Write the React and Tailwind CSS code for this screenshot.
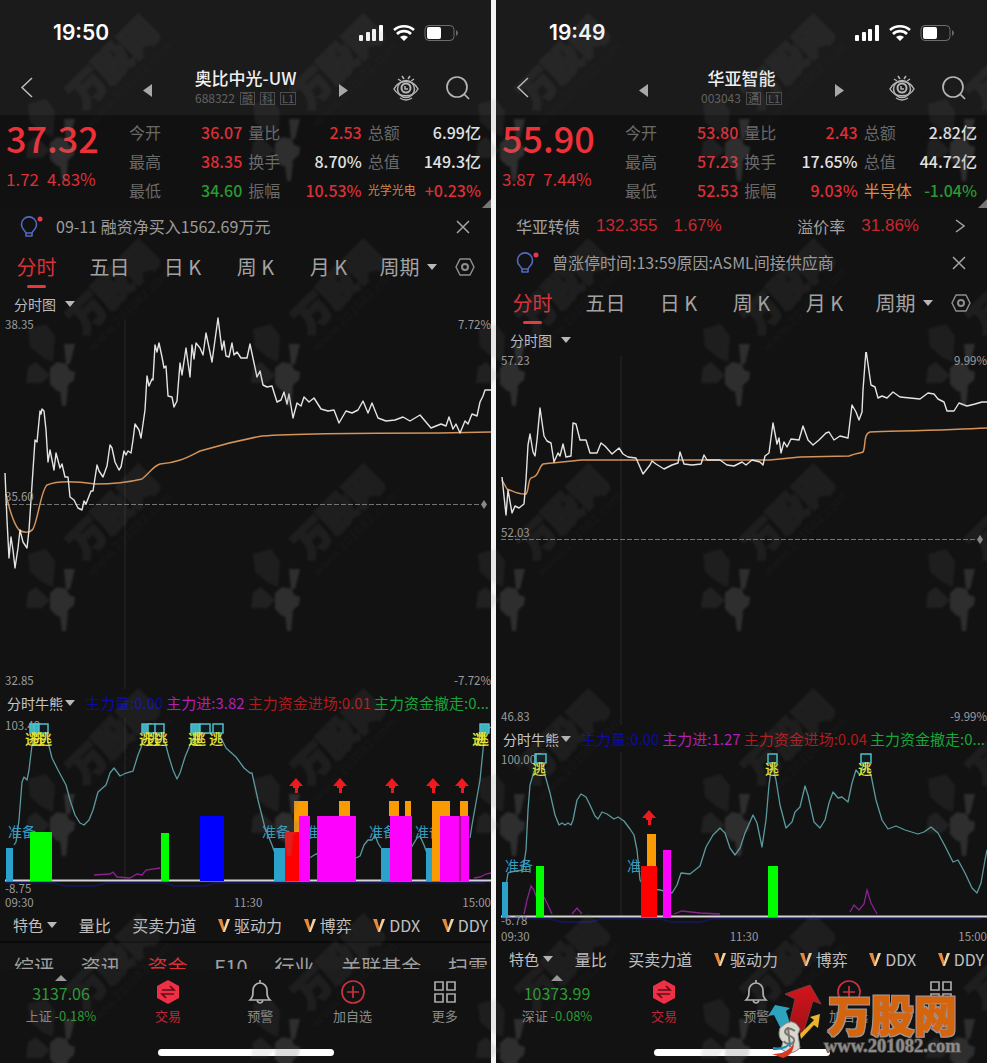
import React from "react";

const LEFT = {
  time: "19:50",
  name: "奥比中光-UW",
  code: "688322",
  tags: ["融", "科", "L1"],
  price: "37.32",
  change: "1.72",
  pct: "4.83%",
  quotes: [
    ["今开", "36.07", "up"], ["量比", "2.53", "up"], ["总额", "6.99亿", "flat"],
    ["最高", "38.35", "up"], ["换手", "8.70%", "flat"], ["总值", "149.3亿", "flat"],
    ["最低", "34.60", "down"], ["振幅", "10.53%", "up"], ["光学光电", "+0.23%", "up"],
  ],
  bond: null,
  message: "09-11 融资净买入1562.69万元",
  chart: {
    box: "0 316 491 376",
    x: 0,
    top: 325,
    bottom: 681,
    high: "38.35",
    low: "32.85",
    highPct: "7.72%",
    lowPct: "-7.72%",
    mid: "35.60",
    midText: 497,
    midLine: 504,
    price: "5,473 7,520 9,558 11,537 13,550 15,568 18,548 20,530 23,542 27,548 29,530 31,500 33,470 35,440 37,442 40,411 41,414 42,409 44,411 46,430 48,462 50,450 54,470 56,453 60,468 62,464 65,477 68,477 70,497 74,500 78,508 82,510 84,501 86,504 91,491 93,491 97,465 99,471 103,477 107,466 110,445 112,448 115,462 119,470 121,467 124,451 126,455 128,451 131,453 133,440 135,424 139,430 141,438 145,410 147,376 149,386 152,379 153,380 155,345 157,352 159,343 162,357 164,368 166,366 168,396 172,397 174,407 177,401 180,363 182,375 186,348 190,377 192,345 194,359 196,343 200,348 203,355 206,333 212,362 218,318 222,350 224,341 226,356 229,357 232,343 234,355 237,352 241,358 247,358 250,344 257,377 260,371 263,385 267,387 272,386 277,402 281,400 284,392 287,404 289,394 293,418 297,403 301,406 304,397 309,402 314,398 321,409 328,411 334,410 339,423 346,411 352,413 358,410 363,401 368,413 372,403 378,418 386,421 395,420 403,417 410,421 420,415 431,428 441,424 446,426 449,417 453,429 456,424 460,433 465,421 468,424 472,414 477,416 480,402 483,396 485,390 491,390",
    average: "M6 494C9 508 14 524 19 530C24 533 30 533 33 529C38 520 41 490 47 485C58 480 75 481 95 484C112 484 130 482 142 479C150 473 153 466 160 464C178 463 188 457 200 451C220 445 240 440 262 436C300 433 380 433 440 433L491 432",
  },
  bull: {
    box: "0 716 491 194",
    base: 880,
    top: "103.49",
    topY: 726,
    low: "-8.75",
    lowY: 889,
    timeY: 903,
    cyan: ["14,845 16,842 19,820 22,782 24,777 27,780 29,770 32,745 36,730 46,730 48,742 52,758 58,770 66,785 70,800 75,815 80,823 84,825 89,820 93,810 98,792 106,785 110,773 114,768 120,776 126,773 133,771 138,755 142,745 146,730 160,730 165,742 169,757 173,770 177,779 180,773 185,757 190,745 197,734 218,732 226,748 236,757 244,768 250,773 252,773 258,800 265,828 272,845 276,856", "308,858 311,857 316,854 320,854", "356,858 360,856 364,845 368,840 372,840 375,835 378,843 381,848", "411,848 417,838 420,836 424,845 428,856", "470,838 472,825 480,780 485,730 491,727"],
    magenta: ["94,875 110,874 113,872 117,877 130,878 137,874 142,875 146,870 160,868", "474,878 480,877 486,874 491,873"],
    bars: [
      [6, 848, 7, 880, "#2aa2c9"], [30, 832, 22, 880, "#00fe00"], [161, 833, 8, 880, "#00fe00"], [200, 816, 24, 880, "#0000fe"],
      [274, 848, 12, 880, "#2aa2c9"], [294, 801, 14, 880, "#fb9b04"], [299, 816, 11, 880, "#fd02fd"], [285, 832, 14, 880, "#fe0000"],
      [317, 816, 39, 880, "#fd02fd"], [339, 801, 11, 816, "#fb9b04"],
      [381, 848, 9, 880, "#2aa2c9"], [390, 816, 22, 880, "#fd02fd"], [389, 801, 10, 816, "#fb9b04"], [405, 801, 6, 816, "#fb9b04"],
      [426, 848, 6, 880, "#2aa2c9"], [432, 801, 18, 816, "#fb9b04"], [432, 816, 8, 880, "#fb9b04"], [440, 816, 29, 880, "#fd02fd"],
      [459, 816, 2, 880, "#a8108c"], [460, 801, 8, 816, "#fb9b04"],
    ],
    arrows: [[296, 778], [340, 778], [392, 778], [433, 778], [462, 778]],
    boxes: [[30, 723, 8, 1], [34, 723, 6, 1], [39, 723, 9, 0], [142, 723, 9, 1], [148, 723, 8, 0], [155, 723, 9, 0], [191, 723, 9, 1], [200, 723, 10, 0], [213, 723, 10, 0], [480, 723, 9, 1]],
    escape: [[25, 739], [31, 739], [38, 739], [139, 739], [146, 739], [154, 739], [188, 739], [192, 739], [209, 739], [472, 739], [475, 739]],
    ready: [[8, 832, "准备"], [262, 832, "准备"], [305, 832, "准备"], [369, 832, "准备"], [415, 832, "准备"]],
  },
  inflow: "3.82",
  entry: "0.01",
  index: "3137.06",
  indexName: "上证",
  indexPct: "-0.18%",
  sections: ["综评", "资讯", "资金", "F10", "行业", "关联基金", "扫雷"],
};

const RIGHT = {
  time: "19:49",
  name: "华亚智能",
  code: "003043",
  tags: ["通", "L1"],
  price: "55.90",
  change: "3.87",
  pct: "7.44%",
  quotes: [
    ["今开", "53.80", "up"], ["量比", "2.43", "up"], ["总额", "2.82亿", "flat"],
    ["最高", "57.23", "up"], ["换手", "17.65%", "flat"], ["总值", "44.72亿", "flat"],
    ["最低", "52.53", "up"], ["振幅", "9.03%", "up"], ["半导体", "-1.04%", "down"],
  ],
  bond: { name: "华亚转债", price: "132.355", pct: "1.67%", premium: "31.86%" },
  message: "曾涨停时间:13:59原因:ASML间接供应商",
  chart: {
    box: "496 352 491 376",
    x: 496,
    top: 361,
    bottom: 717,
    high: "57.23",
    low: "46.83",
    highPct: "9.99%",
    lowPct: "-9.99%",
    mid: "52.03",
    midText: 533,
    midLine: 539,
    price: "502,477 506,515 508,490 512,513 515,506 519,508 524,504 526,480 528,445 530,434 533,452 535,456 537,440 540,408 544,436 547,441 551,443 554,462 558,453 560,456 563,444 566,457 571,456 573,423 576,424 580,440 586,440 590,453 597,453 601,443 605,446 612,454 619,448 623,454 628,457 636,458 643,474 650,465 652,461 656,464 664,469 672,465 678,463 680,452 684,464 692,465 701,464 704,455 707,460 720,460 727,465 734,466 742,462 746,465 752,460 760,462 763,465 765,456 769,453 773,423 777,444 779,438 781,453 784,442 787,447 791,439 799,440 803,426 808,440 813,445 819,440 826,433 829,432 834,440 840,436 848,438 852,405 856,412 859,420 862,412 863,390 866,350 871,385 875,387 878,398 882,396 887,398 893,392 900,397 920,399 928,393 934,394 938,399 944,402 947,411 954,411 959,403 967,406 975,404 982,402 987,402",
    average: "M502 480L507 489C513 491 519 495 526 494C529 490 528 480 531 478C540 476 538 467 543 464C556 463 570 461 582 460L770 460L800 457L849 456C856 453 861 453 863 452C866 447 863 434 870 432C900 431 950 430 987 428",
  },
  bull: {
    box: "496 752 491 192",
    base: 916,
    top: "100.00",
    topY: 760,
    low: "-6.78",
    lowY: 921,
    timeY: 937,
    cyan: ["506,886 508,873 510,872 523,870 526,850 528,810 530,785 533,775 537,762 543,762 545,775 550,793 555,815 559,825 562,823 565,825 568,823 571,825 573,820 577,800 581,794 586,797 590,805 595,816 598,819 602,812 607,814 614,819 618,817 624,821 630,829 634,835 637,850 640,880 645,888 660,890 672,893 677,885 681,873 690,874 700,866 706,847 713,835 720,828 725,833 730,848 735,855 740,848 745,833 753,815 757,823 762,847 766,820 769,785 772,763 776,780 780,805 786,828 792,822 795,812 800,807 805,786 808,795 814,822 820,828 825,820 829,803 833,792 838,798 842,797 848,802 852,783 856,770 860,775 864,762 871,775 876,800 882,820 888,829 896,826 905,830 918,834 924,832 931,827 938,833 945,846 953,862 958,860 965,873 972,888 977,893 981,883 985,860 987,850"],
    magenta: ["524,914 527,900 531,886 534,890 538,902", "544,897 547,903 552,914", "572,914 577,908 582,914", "674,914 682,911 700,913 720,914", "850,912 854,905 859,910 864,904 867,890 871,903 877,914"],
    bars: [
      [502, 882, 6, 916, "#2aa2c9"], [536, 866, 8, 916, "#00fe00"], [647, 834, 9, 866, "#fb9b04"], [641, 866, 16, 916, "#fe0000"],
      [663, 850, 8, 916, "#fd02fd"], [768, 866, 10, 916, "#00fe00"],
    ],
    arrows: [[649, 810]],
    boxes: [[535, 753, 6, 0], [536, 753, 10, 0], [768, 753, 9, 0], [861, 753, 10, 0]],
    escape: [[532, 769], [765, 769], [858, 769]],
    ready: [[505, 866, "准备"], [627, 866, "准"]],
  },
  inflow: "1.27",
  entry: "0.04",
  index: "10373.99",
  indexName: "深证",
  indexPct: "-0.08%",
  sections: null,
};

const tone = { up: "text-[#dc2f38]", down: "text-[#2b9a32]", flat: "text-[#e2e2e2]" };

function StatusBar({ time }) {
  return (
    <div className="flex h-[66px] items-center justify-between pl-[53px] pr-[31px] text-white">
      <span className="font-[Inter] text-[21px] font-semibold">{time}</span>
      <svg className="h-5 w-[102px]" viewBox="0 0 102 20" fill="#fff" aria-hidden="true">
        <rect x="1" y="12" width="4" height="6" rx="1" />
        <rect x="8" y="9" width="4" height="9" rx="1" />
        <rect x="14" y="6" width="4" height="12" rx="1" />
        <rect x="21" y="2" width="4" height="16" rx="1" />
        <path d="M46 18l-4-4a6 6 0 0 1 8 0z" />
        <path d="M39 11a10 10 0 0 1 14 0M36 7a15 15 0 0 1 20 0" fill="none" stroke="#fff" strokeWidth="2.6" />
        <rect x="67" y="2.500" width="29" height="15" rx="4" fill="none" stroke="#6d6d6d" />
        <rect x="69" y="4" width="14" height="12" rx="2" />
        <path d="M98 7q4 3 0 6z" fill="#6d6d6d" />
      </svg>
    </div>
  );
}

function NavBar({ data }) {
  return (
    <header className="grid h-[49px] grid-cols-[1fr_208px_1fr] items-center pb-[6px] pl-[20px] pr-[20px]">
      <button aria-label="返回" className="justify-self-start">
        <svg className="h-6 w-[14px]" viewBox="0 0 14 24" fill="none" stroke="#bdbdbd" strokeWidth="1.5"><path d="M12 2L2 11.500L12 21" /></svg>
      </button>
      <div className="flex items-center justify-between">
        <button aria-label="上一只" className="pt-1"><svg className="h-[13px] w-3" viewBox="0 0 12 13" fill="#a9a9a9"><path d="M10 0v13L1 6.500z" /></svg></button>
        <div className="flex flex-col items-center pb-1">
          <h1 className="text-[17px] font-medium leading-6 text-[#f0f0f0]">{data.name}</h1>
          <p className="flex items-center gap-[5px] text-[12px] leading-4 text-[#626262]">
            <span>{data.code}</span>
            {data.tags.map((t) => (
              <span key={t} className="flex h-[13px] items-center border border-[#4c4c4c] px-px text-[11px]">{t}</span>
            ))}
          </p>
        </div>
        <button aria-label="下一只" className="pt-1"><svg className="h-[13px] w-3" viewBox="0 0 12 13" fill="#a9a9a9"><path d="M2 0v13l9-6.500z" /></svg></button>
      </div>
      <div className="flex items-center gap-[22px] justify-self-end">
        <button aria-label="诊股">
          <svg className="h-7 w-[30px]" viewBox="0 0 30 28" fill="none" stroke="#b5b5b5" strokeWidth="1.500">
            <path d="M3 15C8 5 22 5 27 15C22 24 8 24 3 15z" />
            <circle cx="15" cy="15" r="8.500" />
            <circle cx="15" cy="14" r="4.500" strokeWidth="2" />
            <path d="M14 12v3h3M9 24q6 4 12 0M7 5l3 2M11 2l2 3M19 2l-2 3M23 5l-3 2" />
          </svg>
        </button>
        <button aria-label="搜索">
          <svg className="h-7 w-7" viewBox="0 0 28 28" fill="none" stroke="#b5b5b5" strokeWidth="1.700"><circle cx="14" cy="13" r="10" /><path d="M21 20l5 5" /></svg>
        </button>
      </div>
    </header>
  );
}

function Quote({ data }) {
  return (
    <section className="relative flex h-[93px] bg-[#111]">
      <div className="w-[122px] pl-[6px] text-[#dc2f38]">
        <p className="pt-[2px] text-[36px] font-medium leading-10 text-[#ee3039]">{data.price}</p>
        <p className="flex gap-[8px] pt-[10px] text-[17px] leading-6"><span>{data.change}</span><span>{data.pct}</span></p>
      </div>
      <dl className="grid flex-1 grid-cols-3 gap-x-[6px] pb-[4px] pl-[7px] pr-[10px] pt-[2px] text-[16px] leading-7">
        {data.quotes.map(([label, value, kind], i) => (
          <div key={label} className="flex items-center justify-between whitespace-nowrap">
            <dt className={i < 8 ? "text-[#6a6a6a]" : label.length > 3 ? "text-[12px] text-[#d08448]" : "text-[#e0894a]"}>{label}</dt>
            <dd className={"font-medium " + tone[kind]}>{value}</dd>
          </div>
        ))}
      </dl>
      <svg className="absolute bottom-0 right-0 h-[9px] w-[9px]" viewBox="0 0 9 9" fill="#777" aria-hidden="true"><path d="M9 0v9H0z" /></svg>
    </section>
  );
}

function Bond({ bond }) {
  return (
    <a href="#bond" className="flex h-9 items-center pl-[20px] pr-[22px] text-[16px] text-[#a2a2a2]">
      <span>{bond.name}</span>
      <span className="ml-4 font-['Liberation_Sans'] text-[17px] text-[#c9262f]">{bond.price}</span>
      <span className="ml-4 font-['Liberation_Sans'] text-[17px] text-[#c9262f]">{bond.pct}</span>
      <span className="ml-auto">溢价率</span>
      <span className="ml-4 mr-[36px] font-['Liberation_Sans'] text-[17px] text-[#c9262f]">{bond.premium}</span>
      <svg className="h-4 w-[10px]" viewBox="0 0 10 16" fill="none" stroke="#a2a2a2" strokeWidth="1.500"><path d="M1 2l8 6-8 6" /></svg>
    </a>
  );
}

function Message({ text }) {
  return (
    <div className="flex h-[37px] items-center pl-[19px] pr-[21px] text-[16px] text-[#9c9c9c]">
      <svg className="mr-[11px] h-[26px] w-[26px]" viewBox="0 0 26 26" fill="none" aria-hidden="true">
        <path d="M7 19q-1-2-2.500-3.500a7.500 7.500 0 1 1 11 0Q14 17 13 19v3H7zM7 19h6" stroke="#5269c4" strokeWidth="1.600" strokeLinejoin="round" />
        <circle cx="21" cy="5" r="2.500" fill="#e8384d" />
      </svg>
      <span className="flex-1 pb-[2px]">{text}</span>
      <button aria-label="关闭"><svg className="h-[14px] w-[14px]" viewBox="0 0 14 14" stroke="#a5a5a5" strokeWidth="1.500"><path d="M1 1l12 12M13 1L1 13" /></svg></button>
    </div>
  );
}

function Caret() {
  return <svg className="h-[6px] w-[10px]" viewBox="0 0 10 6" fill="#b8b8b8" aria-hidden="true"><path d="M0 0h10L5 6z" /></svg>;
}

function Periods() {
  return (
    <div>
      <nav className="grid h-11 grid-cols-[73fr_73fr_73fr_73fr_73fr_86fr_40fr] text-[20px] text-[#a3a3a3]">
        <button className="flex flex-col items-center pt-[7px] text-[#dc2f38]">
          <span className="leading-[30px]">分时</span>
          <span className="mt-[3px] h-[3px] w-[19px] rounded-full bg-[#e8383f]" />
        </button>
        <button>五日</button>
        <button>日 K</button>
        <button>周 K</button>
        <button>月 K</button>
        <button className="flex items-center justify-center gap-[7px]">周期<Caret /></button>
        <button className="flex items-center pl-1" aria-label="设置">
          <svg className="h-5 w-5" viewBox="0 0 20 20" fill="none" stroke="#8e8e8e" strokeWidth="1.500"><path d="M5 2h10l4 8-4 8H5l-4-8z" strokeLinejoin="round" /><circle cx="10" cy="10" r="3" strokeWidth="2" /></svg>
        </button>
      </nav>
      <button className="flex h-[27px] items-center gap-[9px] pl-[14px] pt-[3px] text-[14px] text-[#bcbcbc]">分时图<Caret /></button>
    </div>
  );
}

function PriceChart({ c }) {
  const r = c.x + 491;
  return (
    <svg className="h-auto w-full" viewBox={c.box} role="img" aria-label="分时走势">
      <path d={`M${c.x + 125} ${c.top - 5}V${c.bottom + 8}`} stroke="#1c1c1c" strokeWidth="2" />
      <path d={`M${c.x + 5} ${c.midLine}.5H${r - 10}`} stroke="#747474" strokeDasharray="5 2" />
      <path d={`M${r - 7} ${c.midLine - 4}l3 4.500-3 4.500-3-4.500z`} fill="#888" />
      <path d={c.average} fill="none" stroke="#d3935a" strokeWidth="1.500" />
      <polyline points={c.price} fill="none" stroke="#e4e4e4" strokeWidth="1.400" strokeLinejoin="round" />
      <g fill="#9b9b9b" fontSize="11.500">
        <text x={c.x + 5} y={c.top + 4}>{c.high}</text>
        <text x={r} y={c.top + 4} textAnchor="end">{c.highPct}</text>
        <text x={c.x + 5} y={c.midText + 4}>{c.mid}</text>
        <text x={c.x + 5} y={c.bottom + 4}>{c.low}</text>
        <text x={r} y={c.bottom + 4} textAnchor="end">{c.lowPct}</text>
      </g>
    </svg>
  );
}

function BullChart({ b, x }) {
  return (
    <svg className="h-auto w-full" viewBox={b.box} role="img" aria-label="分时牛熊">
      <path d={`M${x + 125} ${b.topY - 8}V${b.base}`} stroke="#1c1c1c" strokeWidth="2" />
      <path d={`M${x + 5} ${b.base + 3}h50l10 3h30l10-3h60l10 3h30l10-3h270`} fill="none" stroke="#15154e" strokeWidth="2" />
      <g fill="#9b9b9b" fontSize="11.500"><text x={x + 5} y={b.topY + 4}>{b.top}</text></g>
      {b.magenta.map((p) => <polyline key={p} points={p} fill="none" stroke="#8d2192" strokeWidth="1.300" />)}
      <g fill="#2f9dc6" fontSize="14">{b.ready.map(([tx, ty, t]) => <text key={tx} x={tx} y={ty + 5}>{t}</text>)}</g>
      {b.cyan.map((p) => <polyline key={p} points={p} fill="none" stroke="#5a9a9e" strokeWidth="1.300" strokeLinejoin="round" />)}
      {b.bars.map(([bx, y, w, end, color], i) => <rect key={i} x={bx} y={y} width={w} height={end - y} fill={color} />)}
      <path d={`M${x + 5} ${b.base}.5H${x + 491}`} stroke="#d4d4d4" strokeWidth="2" />
      {b.bars.filter((v) => v[3] === b.base).map(([bx, , w, end, color], i) => <rect key={i} x={bx} y={end - 1} width={w} height="2" fill={color} />)}
      {b.boxes.map(([bx, y, w, full], i) => <rect key={i} x={bx} y={y + 1} width={w} height="9" fill={full ? "#3fb3bd" : "#10191b"} stroke="#4fc0d0" strokeWidth="1.500" />)}
      <g fill="#e6e639" fontSize="14" fontWeight="500">{b.escape.map(([tx, ty]) => <text key={tx} x={tx} y={ty + 5}>逃</text>)}</g>
      {b.arrows.map(([ax, ay]) => <path key={ax} d={`M${ax} ${ay}l7 8h-4v2h-1v5h-3v-5h-2v-2h-4z`} fill="#f0191d" />)}
      <g fill="#9b9b9b" fontSize="11.500">
        <text x={x + 5} y={b.lowY + 4}>{b.low}</text>
        <text x={x + 5} y={b.timeY + 4}>09:30</text>
        <text x={x + 248} y={b.timeY + 4} textAnchor="middle">11:30</text>
        <text x={x + 491} y={b.timeY + 4} textAnchor="end">15:00</text>
      </g>
    </svg>
  );
}

function Legend({ data }) {
  return (
    <div className="flex h-6 items-center overflow-hidden whitespace-nowrap pb-[2px] pl-[7px] text-[15px]">
      <button className="flex items-center gap-[2px] text-[14px] text-[#c6c6c6]">分时牛熊<Caret /></button>
      <span className="ml-[10px] text-[#0c0c9e]">主力量:0.00</span>
      <span className="ml-[3px] text-[#b21fb5]">主力进:{data.inflow}</span>
      <span className="ml-[3px] text-[#b3181c]">主力资金进场:{data.entry}</span>
      <span className="ml-[3px] text-[#16a63a]">主力资金撤走:0...</span>
    </div>
  );
}

function Vip({ children }) {
  return (
    <button className="flex items-center gap-[4px]">
      <svg className="h-[13px] w-[12px]" viewBox="0 0 12 13" aria-hidden="true"><path d="M0 0h4l2 8 1 4-2 1z" fill="#e78a3a" /><path d="M9 0h3L7 13H5l1-4z" fill="#f5cf9c" /></svg>
      {children}
    </button>
  );
}

function Features() {
  return (
    <div className="flex h-[31px] items-center justify-between whitespace-nowrap pb-px pl-[13px] pr-[3px] text-[16px] text-[#c0c0c0]">
      <button className="flex items-center gap-[4px] text-[15px]">特色<Caret /></button>
      <button>量比</button>
      <button>买卖力道</button>
      <Vip>驱动力</Vip>
      <Vip>博弈</Vip>
      <Vip>DDX</Vip>
      <Vip>DDY</Vip>
    </div>
  );
}

function Sections({ items }) {
  return (
    <nav className="flex h-7 justify-between overflow-hidden whitespace-nowrap border-t-2 border-[#0a0a0a] bg-[#141414] pl-[14px] pr-[3px] pt-[12px] text-[20px] leading-6 text-[#a0a0a0]">
      {items.map((s) => <a key={s} href={"#" + s} className={s === "资金" ? "text-[#dc2f38]" : ""}>{s}</a>)}
    </nav>
  );
}

function Action({ label, red, children }) {
  return (
    <button className={"flex flex-1 flex-col items-center text-[13px] leading-[18px] " + (red ? "text-[#c3263a]" : "text-[#8a8a8a]")}>
      <svg className="mb-[2px] h-[26px] w-[26px]" viewBox="0 0 26 26" fill="none" strokeWidth="1.700" aria-hidden="true">{children}</svg>
      {label}
    </button>
  );
}

function BottomBar({ data }) {
  return (
    <footer className="mt-auto">
      <div className="flex items-end">
        <a href="#index" className="flex w-[122px] flex-col items-center text-[#2b9a32]">
          <svg className="h-[6px] w-[12px]" viewBox="0 0 12 6" fill="#9a9a9a" aria-hidden="true"><path d="M6 0l6 6H0z" /></svg>
          <span className="pb-[2px] text-[16px] leading-6">{data.index}</span>
          <span className="whitespace-nowrap text-[13px] leading-[18px]"><span className="text-[#8a8a8a]">{data.indexName}</span> {data.indexPct}</span>
        </a>
        <Action label="交易" red>
          <path d="M13 1l11 6v12l-11 6-11-6V7z" fill="#ee2f45" />
          <path d="M7 11h12l-4-4M19 15H7l4 4" stroke="#5c1018" />
        </Action>
        <Action label="预警">
          <path d="M3 21c3-3 3-5 3-10a7 7 0 0 1 14 0c0 5 0 7 3 10zM10 22q3 4 6 0M13 1v3" stroke="#b4b4b4" />
        </Action>
        <Action label="加自选">
          <circle cx="13" cy="13" r="11" stroke="#c9323f" />
          <path d="M13 7v12M7 13h12" stroke="#c9323f" />
        </Action>
        <Action label="更多">
          <path d="M3 3h8v8H3zM15 3h8v8h-8zM3 15h8v8H3zM15 15h8v8h-8z" stroke="#a8a8a8" />
        </Action>
      </div>
      <div className="mx-auto mb-[9px] mt-[24px] h-[7px] w-[176px] rounded-full bg-white" />
    </footer>
  );
}

function Phone({ data }) {
  return (
    <article className="flex min-w-0 flex-1 flex-col bg-[#121212]">
      <div className="bg-[#1b1b1b]">
        <StatusBar time={data.time} />
        <NavBar data={data} />
      </div>
      <Quote data={data} />
      {data.bond && <Bond bond={data.bond} />}
      <Message text={data.message} />
      <Periods />
      <PriceChart c={data.chart} />
      <Legend data={data} />
      <BullChart b={data.bull} x={data.chart.x} />
      <Features />
      {data.sections && <Sections items={data.sections} />}
      <BottomBar data={data} />
    </article>
  );
}

function Watermark() {
  return (
    <svg className="pointer-events-none absolute inset-0 h-full w-full" aria-hidden="true">
      <defs>
        <filter id="soft"><feGaussianBlur stdDeviation="1" /></filter>
        <pattern id="mark" width="225" height="225" patternUnits="userSpaceOnUse">
          <g fill="#808080" filter="url(#soft)">
            <g opacity=".11">
              <text x="0" y="0" transform="translate(84 110) rotate(-45)" fontSize="36" fontWeight="900" stroke="#808080" strokeWidth="3">万股网</text>
              <path d="M28 104l18-5 9 12-2 26-11-5-12-10z" />
            </g>
            <g opacity=".04">
              <text x="0" y="0" transform="translate(92 128) rotate(-45)" fontSize="13" fontWeight="700">www.201082.com</text>
            </g>
            <path opacity=".13" d="M26 158l2-16 8-5 14 13-8 8z" />
            <g opacity=".26">
              <path d="M50 143l7-6 10 2 2 6 6 2-1 8-5 4-4 8-8-1-7-7zM66 139l-2-20h11l-5 20zM60 165l8-2-2 18h-4z" />
            </g>
          </g>
        </pattern>
      </defs>
      <rect width="100%" height="100%" fill="url(#mark)" />
    </svg>
  );
}

function SiteLogo() {
  return (
    <a href="#site" aria-label="万股网" className="absolute bottom-0 right-[20px]">
      <svg className="h-[84px] w-[200px]" viewBox="0 0 200 84">
        <defs>
          <linearGradient id="redArrow" x1="0" y1="0" x2="0" y2="1"><stop offset="0" stopColor="#d3151b" /><stop offset="1" stopColor="#9f1218" /></linearGradient>
          <filter id="edge" x="-5%" y="-10%" width="110%" height="120%">
            <feMorphology in="SourceAlpha" operator="dilate" radius="1" result="wide" />
            <feFlood floodColor="#9b9892" />
            <feComposite in2="wide" operator="in" result="rim" />
            <feMerge><feMergeNode in="rim" /><feMergeNode in="SourceGraphic" /></feMerge>
          </filter>
        </defs>
        <path d="M18 13L43 4l11 19-8-3-10 32-15-3 7-31z" fill="url(#redArrow)" stroke="#7c3a3a" />
        <path d="M1 35l7-11 15 3-4 3 6 18-10 2-8-16z" fill="#2da3bd" />
        <path d="M33 53l14-14-4-3 10-3-2 14-4-3-13 14z" fill="#e8b52c" />
        <path d="M13 47q13-13 20 1l-2 5 2 14q-9 9-19 1l2-7q-6-5-3-14z" fill="#d8d8cf" stroke="#858580" />
        <path d="M28 50q-9-6-10 1c1 5 10 3 9 9-1 5-9 3-10 0M21 46l2 20" fill="none" stroke="#777770" strokeWidth="2" />
        <path d="M6 66q12 2 19-6-4 10-19 9z" fill="#168dbd" />
        <path d="M5 73q15 1 22-11 0 12-11 15z" fill="#d93825" />
        <text x="61" y="51" fontSize="43" fontWeight="900" fill="#d36510" stroke="#d36510" strokeWidth="1" filter="url(#edge)">万股网</text>
        <text x="57" y="71" fontFamily="Liberation Serif, serif" fontSize="18.500" fontWeight="700" fill="#8d8b88" stroke="#4c4a48" strokeWidth="1.500" paintOrder="stroke">www.201082.com</text>
      </svg>
    </a>
  );
}

export default function App() {
  return (
    <main className="relative flex min-h-screen gap-[5px] overflow-hidden bg-[#f4f4f4] font-['Noto_Sans_CJK_SC',sans-serif]">
      <Phone data={LEFT} />
      <Phone data={RIGHT} />
      <Watermark />
      <SiteLogo />
    </main>
  );
}
